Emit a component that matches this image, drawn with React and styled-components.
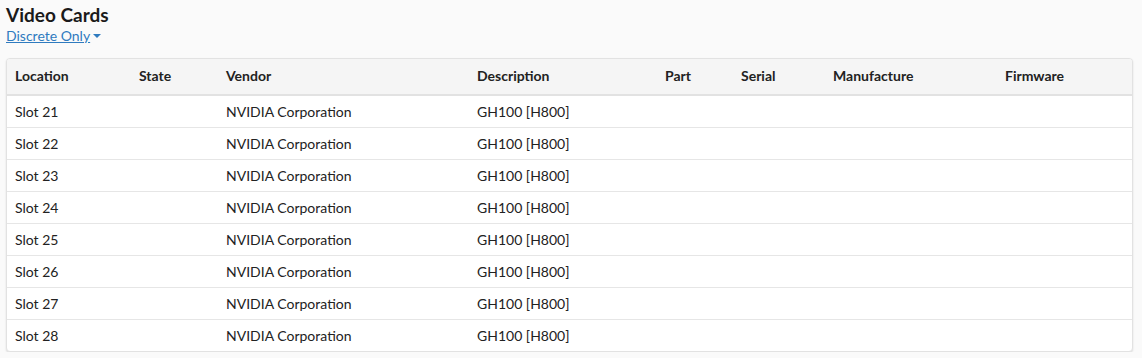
import React from 'react';
import styled, { createGlobalStyle } from 'styled-components';

const GlobalStyle = createGlobalStyle`
  body {
    margin: 0;
    background: #fafafa;
    font-family: Lato, "Open Sans", sans-serif;
    color: #222;
  }
`;

const Page = styled.div`
  padding: 5px 9px 0 6px;
`;

const Title = styled.h2`
  margin: 0;
  font-size: 19px;
  font-weight: 700;
  line-height: 20px;
  color: #1a1a1a;
`;

const FilterLink = styled.a`
  display: inline-flex;
  align-items: center;
  gap: 3px;
  font-size: 14px;
  line-height: 16px;
  color: #2f7bbf;
  text-decoration: underline;
  cursor: pointer;
`;

const Caret = styled.span`
  width: 0;
  height: 0;
  border-left: 4px solid transparent;
  border-right: 4px solid transparent;
  border-top: 4px solid #2f7bbf;
  margin-bottom: 1px;
`;

const Card = styled.div`
  margin-top: 14px;
  background: #fff;
  border: 1px solid #e2e2e2;
  border-radius: 4px;
  box-shadow: 0 1px 2px rgba(0, 0, 0, 0.12);
  overflow: hidden;
`;

const Table = styled.table`
  width: 100%;
  border-collapse: collapse;
  table-layout: fixed;
  font-size: 14px;
`;

const HeadCell = styled.th`
  box-sizing: border-box;
  text-align: left;
  font-weight: 700;
  color: #222;
  background: #f5f5f5;
  height: 36px;
  padding: 0 8px 2px;
  border-bottom: 2px solid #e2e2e2;
  width: ${(p) => p.w}px;
`;

const Row = styled.tr`
  & + & td {
    border-top: 1px solid #e6e6e6;
  }
`;

const Cell = styled.td`
  box-sizing: border-box;
  height: 32px;
  padding: 0 8px;
  color: #222;
  white-space: nowrap;
`;

const columns = [
  ['Location', 124],
  ['State', 87],
  ['Vendor', 251],
  ['Description', 188],
  ['Part', 76],
  ['Serial', 92],
  ['Manufacture', 172],
  ['Firmware', 135],
];

const cards = [21, 22, 23, 24, 25, 26, 27, 28].map((n) => ({
  location: `Slot ${n}`,
  state: '',
  vendor: 'NVIDIA Corporation',
  description: 'GH100 [H800]',
}));

export default function App() {
  return (
    <Page>
      <GlobalStyle />
      <Title>Video Cards</Title>
      <FilterLink>
        Discrete Only
        <Caret />
      </FilterLink>
      <Card>
        <Table>
          <thead>
            <tr>
              {columns.map(([name, w]) => (
                <HeadCell key={name} w={w}>
                  {name}
                </HeadCell>
              ))}
            </tr>
          </thead>
          <tbody>
            {cards.map((c) => (
              <Row key={c.location}>
                <Cell>{c.location}</Cell>
                <Cell>{c.state}</Cell>
                <Cell>{c.vendor}</Cell>
                <Cell>{c.description}</Cell>
                <Cell />
                <Cell />
                <Cell />
                <Cell />
              </Row>
            ))}
          </tbody>
        </Table>
      </Card>
    </Page>
  );
}
